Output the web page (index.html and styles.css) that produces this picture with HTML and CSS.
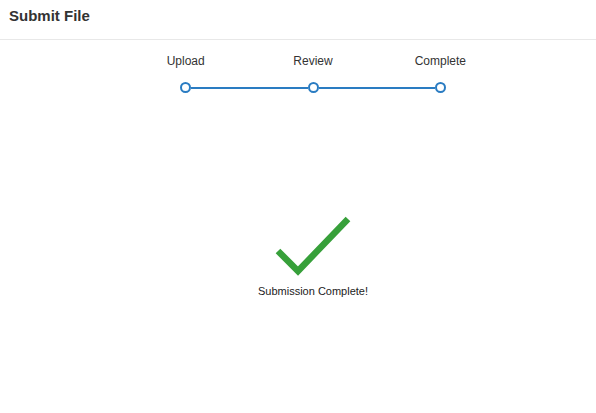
FILE: index.html
```html
<!DOCTYPE html>
<html>
<head>
<meta charset="utf-8">
<link rel="stylesheet" href="styles.css">
</head>
<body>
<header class="header">
  <h1 class="title">Submit File</h1>
</header>
<main class="main">
  <div class="steps">
    <div class="labels">
      <span class="label">Upload</span>
      <span class="label">Review</span>
      <span class="label">Complete</span>
    </div>
    <div class="track">
      <span class="dot"></span>
      <span class="line"></span>
      <span class="dot"></span>
      <span class="line"></span>
      <span class="dot"></span>
    </div>
  </div>
  <div class="done">
    <svg class="check" width="80" height="64" viewBox="0 0 80 64">
      <polyline points="5,38 25,58 75,6" fill="none" stroke="#37a03a" stroke-width="6.5"/>
    </svg>
    <p class="message">Submission Complete!</p>
  </div>
</main>
</body>
</html>
```
FILE: styles.css
```css
html, body {
  margin: 0;
  padding: 0;
  background: #fff;
  font-family: "Liberation Sans", Arial, sans-serif;
  color: #333;
}
.header {
  height: 40px;
  border-bottom: 1px solid #e8e8e8;
  padding: 7px 9px 0;
  box-sizing: border-box;
}
.title {
  margin: 0;
  font-size: 15px;
  line-height: 18px;
  font-weight: bold;
  color: #333;
}
.main {
  padding-left: 30px;
}
.steps {
  width: 382px;
  margin: 0 auto;
  padding-top: 14px;
}
.labels {
  display: grid;
  grid-template-columns: repeat(3, 1fr);
  text-align: center;
  font-size: 12px;
  line-height: 14px;
  color: #333;
}
.track {
  width: 266px;
  margin: 14px auto 0;
  display: flex;
  align-items: center;
}
.dot {
  width: 11px;
  height: 11px;
  box-sizing: border-box;
  border: 2px solid #2a7cc2;
  border-radius: 50%;
  background: #fff;
  flex: none;
}
.line {
  flex: 1;
  height: 2px;
  background: #2a7cc2;
}
.done {
  display: flex;
  flex-direction: column;
  align-items: center;
  margin-top: 120px;
}
.check {
  display: block;
}
.message {
  margin: 8px 0 0;
  font-size: 11px;
  line-height: 13px;
  color: #222;
}
```
